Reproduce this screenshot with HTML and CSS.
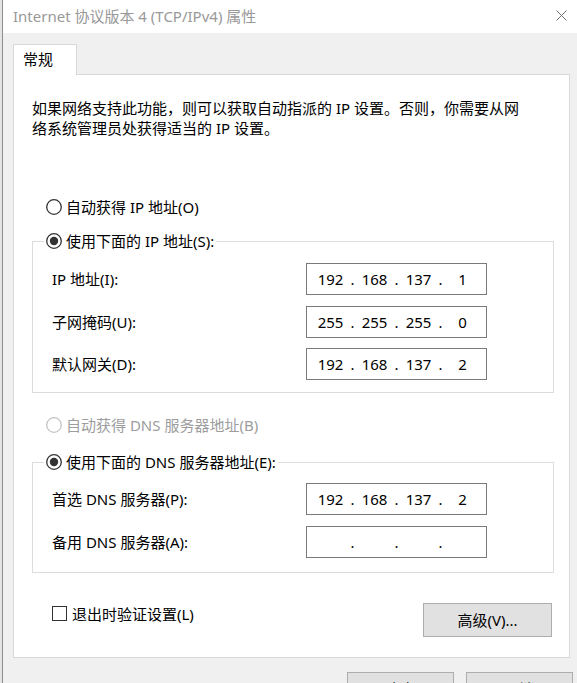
FILE: index.html
```html
<!DOCTYPE html>
<html lang="zh-CN">
<head>
<meta charset="utf-8">
<title>Internet 协议版本 4 (TCP/IPv4) 属性</title>
<link rel="stylesheet" href="styles.css">
</head>
<body>
<div class="screen">
  <div class="behind"></div>
  <div class="window">
    <div class="titlebar">
      <span class="title">Internet 协议版本 4 (TCP/IPv4) 属性</span>
      <svg class="close" width="11" height="11" viewBox="0 0 11 11"><path d="M0.5 0.5L10.5 10.5M10.5 0.5L0.5 10.5" stroke="#707070" stroke-width="1" fill="none"/></svg>
    </div>
    <div class="body">
      <div class="tabs"><div class="tab">常规</div></div>
      <div class="panel">
        <p class="intro">如果网络支持此功能，则可以获取自动指派的 IP 设置。否则，你需要从网<br>络系统管理员处获得适当的 IP 设置。</p>

        <div class="radio-row">
          <svg class="radio" width="16" height="16" viewBox="0 0 16 16"><circle cx="8" cy="8" r="7.3" fill="#fff" stroke="#333" stroke-width="1.3"/></svg>
          <span>自动获得 IP 地址(O)</span>
        </div>

        <fieldset class="group g1">
          <legend class="radio-row legend">
            <svg class="radio" width="16" height="16" viewBox="0 0 16 16"><circle cx="8" cy="8" r="7.3" fill="#fff" stroke="#333" stroke-width="1.3"/><circle cx="8" cy="8" r="4.2" fill="#333"/></svg>
            <span>使用下面的 IP 地址(S):</span>
          </legend>
          <div class="fields">
            <span class="label">IP 地址(I):</span>
            <div class="ip"><span class="oct">192</span><span class="dot">.</span><span class="oct">168</span><span class="dot">.</span><span class="oct">137</span><span class="dot">.</span><span class="oct">1</span></div>
            <span class="label">子网掩码(U):</span>
            <div class="ip"><span class="oct">255</span><span class="dot">.</span><span class="oct">255</span><span class="dot">.</span><span class="oct">255</span><span class="dot">.</span><span class="oct">0</span></div>
            <span class="label">默认网关(D):</span>
            <div class="ip"><span class="oct">192</span><span class="dot">.</span><span class="oct">168</span><span class="dot">.</span><span class="oct">137</span><span class="dot">.</span><span class="oct">2</span></div>
          </div>
        </fieldset>

        <div class="radio-row disabled r3">
          <svg class="radio" width="16" height="16" viewBox="0 0 16 16"><circle cx="8" cy="8" r="7.3" fill="#fff" stroke="#c4c4c4" stroke-width="1.3"/></svg>
          <span>自动获得 DNS 服务器地址(B)</span>
        </div>

        <fieldset class="group g2">
          <legend class="radio-row legend">
            <svg class="radio" width="16" height="16" viewBox="0 0 16 16"><circle cx="8" cy="8" r="7.3" fill="#fff" stroke="#333" stroke-width="1.3"/><circle cx="8" cy="8" r="4.2" fill="#333"/></svg>
            <span>使用下面的 DNS 服务器地址(E):</span>
          </legend>
          <div class="fields">
            <span class="label">首选 DNS 服务器(P):</span>
            <div class="ip"><span class="oct">192</span><span class="dot">.</span><span class="oct">168</span><span class="dot">.</span><span class="oct">137</span><span class="dot">.</span><span class="oct">2</span></div>
            <span class="label">备用 DNS 服务器(A):</span>
            <div class="ip"><span class="oct"></span><span class="dot">.</span><span class="oct"></span><span class="dot">.</span><span class="oct"></span><span class="dot">.</span><span class="oct"></span></div>
          </div>
        </fieldset>

        <div class="footer">
          <label class="check"><span class="box"></span><span>退出时验证设置(L)</span></label>
          <button class="btn advanced">高级(V)...</button>
        </div>
      </div>
      <div class="actions">
        <button class="btn dlg">确定</button>
        <button class="btn dlg">取消</button>
      </div>
    </div>
  </div>
</div>
</body>
</html>
```

FILE: styles.css
```css
html, body {
  margin: 0;
  padding: 0;
}
body {
  font-family: "Noto Sans", "Noto Sans CJK SC", sans-serif;
  font-size: 15px;
  line-height: 20px;
  color: #000;
  background: #f0f0f0;
}
.screen {
  display: flex;
  width: 577px;
  height: 683px;
  overflow: hidden;
}
.behind {
  width: 2px;
  flex: none;
  background: #e4e4e4;
  border-right: 1px solid #8e8e8e;
}
.window {
  flex: 1;
  display: flex;
  flex-direction: column;
  min-width: 0;
}
.titlebar {
  height: 33px;
  flex: none;
  background: #fff;
  display: flex;
  align-items: center;
  justify-content: space-between;
  padding: 0 10px;
  box-sizing: border-box;
}
.title {
  color: #999;
  font-size: 15px;
  padding-bottom: 2px;
}
.close {
  display: block;
  margin-bottom: 3px;
}
.body {
  flex: 1;
  background: #f0f0f0;
  padding: 11px 7px 0 10px;
}
.tabs {
  display: flex;
}
.tab {
  position: relative;
  z-index: 1;
  width: 53px;
  height: 26px;
  padding: 4px 0 0 9px;
  background: #fff;
  border: 1px solid #d9d9d9;
  border-bottom: none;
  margin-bottom: -1px;
}
.panel {
  background: #fff;
  border: 1px solid #d9d9d9;
  padding: 0 0 20px 0;
}
.intro {
  margin: 0;
  padding: 23px 0 0 18px;
  white-space: nowrap;
}
.radio-row {
  display: flex;
  align-items: center;
  gap: 4px;
  height: 20px;
  margin: 59px 0 0 32px;
  white-space: nowrap;
}
.radio {
  display: block;
  flex: none;
}
.radio-row.disabled {
  color: #9d9d9d;
}
.radio-row.r3 {
  margin-top: 22px;
}
.group {
  border: 1px solid #dcdcdc;
  margin: 14px 15px 0 18px;
  padding: 12px 0 12px 11px;
  min-width: 0;
}
.group.g2 {
  margin-top: 17px;
  padding-top: 11px;
  padding-bottom: 14px;
}
.legend {
  margin: 0;
  padding: 0 2px;
  background: #fff;
}
.fields {
  display: grid;
  grid-template-columns: 254px 181px;
  grid-auto-rows: 32px;
  row-gap: 10.5px;
  align-items: center;
  padding-left: 8px;
}
.label {
  white-space: nowrap;
}
.ip {
  height: 32px;
  box-sizing: border-box;
  border: 1px solid #7a7a7a;
  display: flex;
  align-items: center;
  padding-left: 5px;
  background: #fff;
}
.oct {
  width: 37px;
  text-align: center;
}
.dot {
  width: 7px;
  text-align: center;
}
.footer {
  display: flex;
  justify-content: space-between;
  align-items: flex-start;
  margin-top: 30px;
  padding: 0 17px 0 38px;
}
.check {
  display: flex;
  align-items: center;
  gap: 5px;
  height: 22px;
}
.box {
  width: 15px;
  height: 15px;
  box-sizing: border-box;
  border: 1px solid #333;
  background: #fff;
}
.btn {
  font-family: inherit;
  font-size: 15px;
  line-height: 20px;
  color: #000;
  background: #e1e1e1;
  border: 1px solid #adadad;
  height: 34px;
  padding: 0;
  margin: 0;
}
.advanced {
  width: 129px;
}
.actions {
  display: flex;
  justify-content: flex-end;
  gap: 12px;
  margin-top: 14px;
  margin-right: -3px;
}
.dlg {
  width: 107px;
}
```
